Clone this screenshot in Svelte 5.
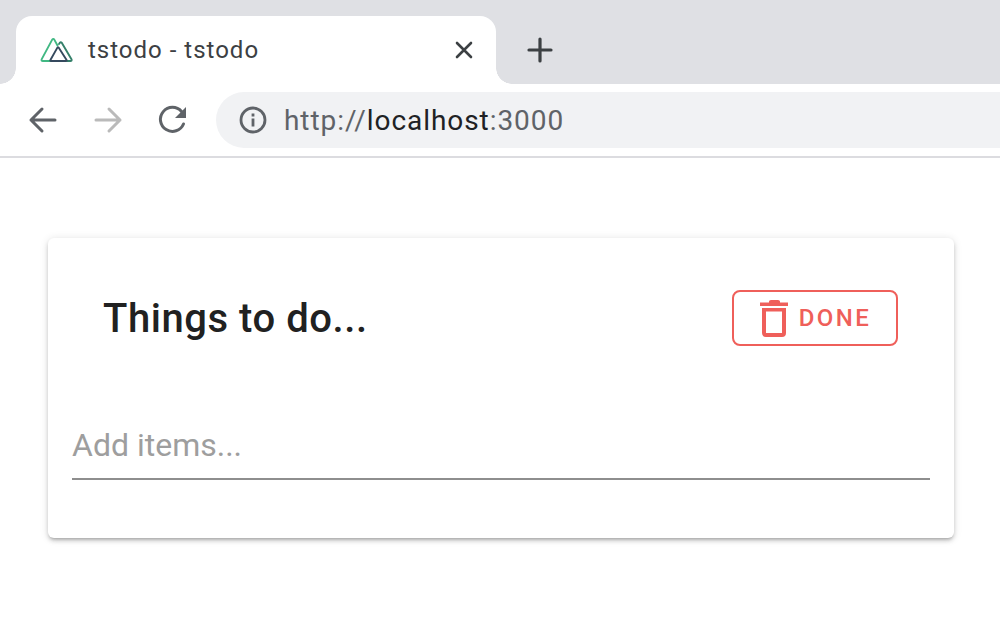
<script>
  let item = $state("");
</script>

<div class="browser">
  <div class="tabstrip">
    <div class="tab">
      <svg class="favicon" width="33" height="26" viewBox="0 0 33 26" fill="none" stroke-width="1.9" stroke-linejoin="round" stroke-linecap="round">
        <path d="M17.5 8.5 L14.3 2.6 Q13.3 1.2 12.2 2.6 L1.6 22.4 Q1.2 24 2.8 24 H10.5" stroke="#41b883" />
        <path d="M19 7 L20 5.6 Q20.8 4.6 21.6 5.6 L31.6 22.4 Q32 24 30.4 24 H27" stroke="#35806a" />
        <path d="M18.6 10.6 Q18 10 17.4 10.6 L10.4 23 Q10 24 11 24 H26 Q27 24 26.6 23 Z" stroke="#35495e" />
      </svg>
      <span class="tab-title">tstodo - tstodo</span>
      <svg class="close" width="18" height="18" viewBox="0 0 18 18">
        <path d="M2 2 L16 16 M16 2 L2 16" stroke="#3c4043" stroke-width="2.6" stroke-linecap="round" />
      </svg>
    </div>
    <svg class="newtab" width="26" height="26" viewBox="0 0 26 26">
      <path d="M13 2 V24 M2 13 H24" stroke="#3c4043" stroke-width="3.2" stroke-linecap="round" />
    </svg>
  </div>

  <div class="toolbar">
    <svg class="nav" width="32" height="32" viewBox="0 0 32 32" fill="none" stroke="#5f6368" stroke-width="3" stroke-linecap="round" stroke-linejoin="round">
      <path d="M28 16 H4 M15 5 L4 16 L15 27" />
    </svg>
    <svg class="nav" width="32" height="32" viewBox="0 0 32 32" fill="none" stroke="#bababa" stroke-width="3" stroke-linecap="round" stroke-linejoin="round">
      <path d="M4 16 H28 M17 5 L28 16 L17 27" />
    </svg>
    <svg class="nav" width="32" height="32" viewBox="0 0 32 32" fill="none">
      <path d="M26.5 20 A12 12 0 1 1 24.5 7.5" stroke="#5f6368" stroke-width="3" stroke-linecap="round" />
      <path d="M29 3 V14 H18 Z" fill="#5f6368" />
    </svg>
    <div class="omnibox">
      <svg width="28" height="28" viewBox="0 0 28 28" fill="none">
        <circle cx="14" cy="14" r="12" stroke="#5f6368" stroke-width="2.8" />
        <rect x="12.6" y="12.5" width="2.8" height="8" fill="#5f6368" />
        <rect x="12.6" y="7.5" width="2.8" height="3" fill="#5f6368" />
      </svg>
      <span class="url">http://<b>localhost</b>:3000</span>
    </div>
  </div>

  <main class="page">
    <section class="card">
      <header class="card-head">
        <h1>Things to do...</h1>
        <button class="done">
          <svg width="30" height="38" viewBox="0 0 30 38" fill="#ef5f5a">
            <path d="M10 1.5 Q10 0 12 0 H19 Q21 0 21 1.5 V2.5 H29 V6 H1 V2.5 H10 Z" />
            <path fill-rule="evenodd" d="M3 8 H27 V33 Q27 37 23 37 H7 Q3 37 3 33 Z M7 11.5 V33 H23 V11.5 Z" />
          </svg>
          <span>DONE</span>
        </button>
      </header>
      <div class="field">
        <input bind:value={item} placeholder="Add items..." />
      </div>
    </section>
  </main>
</div>

<style>
  :global(body) {
    background: #fff;
    font-family: Roboto, "Liberation Sans", sans-serif;
  }
  .browser {
    width: 1000px;
    height: 640px;
    overflow: hidden;
    display: flex;
    flex-direction: column;
  }
  .tabstrip {
    height: 84px;
    background: #dfe0e4;
    padding: 16px 0 0 16px;
    box-sizing: border-box;
    display: flex;
    align-items: flex-start;
  }
  .tab {
    position: relative;
    width: 480px;
    height: 68px;
    background: #fff;
    border-radius: 16px 16px 0 0;
    display: flex;
    align-items: center;
    padding: 0 23px 0 24px;
    box-sizing: border-box;
  }
  .tab::before,
  .tab::after {
    content: "";
    position: absolute;
    bottom: 0;
    width: 16px;
    height: 16px;
  }
  .tab::before {
    left: -16px;
    background: radial-gradient(circle at 0 0, #dfe0e4 15.5px, #fff 16px);
  }
  .tab::after {
    right: -16px;
    background: radial-gradient(circle at 100% 0, #dfe0e4 15.5px, #fff 16px);
  }
  .favicon {
    flex: none;
  }
  .tab-title {
    margin-left: 15px;
    font-size: 24px;
    letter-spacing: 1px;
    color: #3c4043;
    flex: 1;
    white-space: nowrap;
  }
  .close {
    flex: none;
  }
  .newtab {
    margin: 21px 0 0 31px;
  }
  .toolbar {
    height: 74px;
    border-bottom: 2px solid #dcdce0;
    box-sizing: border-box;
    display: flex;
    align-items: flex-start;
    padding: 8px 0 0 27px;
    gap: 33px;
    background: #fff;
  }
  .nav {
    flex: none;
    margin-top: 12px;
  }
  .omnibox {
    flex: 1;
    height: 56px;
    margin-left: -6px;
    margin-right: -40px;
    background: #f1f2f4;
    border-radius: 28px;
    display: flex;
    align-items: center;
    padding-left: 23px;
    gap: 17px;
  }
  .url {
    font-size: 28px;
    letter-spacing: 0.93px;
    color: #5f6368;
    white-space: nowrap;
  }
  .url b {
    font-weight: 400;
    color: #202124;
  }
  .page {
    padding: 80px 46px 0 48px;
  }
  .card {
    height: 300px;
    background: #fff;
    border-radius: 6px;
    box-shadow: 0 3px 3px -2px rgba(0, 0, 0, 0.2), 0 3px 4px rgba(0, 0, 0, 0.14), 0 1px 8px rgba(0, 0, 0, 0.12);
    display: flex;
    flex-direction: column;
    padding: 52px 24px 0;
    box-sizing: border-box;
  }
  .card-head {
    display: flex;
    align-items: center;
    justify-content: space-between;
    padding: 0 32px 0 31px;
  }
  h1 {
    margin: 0;
    font-size: 40px;
    font-weight: 500;
    letter-spacing: 0.55px;
    color: #212121;
  }
  .done {
    width: 166px;
    height: 56px;
    background: none;
    border: 2px solid #ef5f5a;
    border-radius: 8px;
    color: #ef5f5a;
    font-family: inherit;
    font-size: 24px;
    font-weight: 500;
    letter-spacing: 2.4px;
    display: flex;
    align-items: center;
    justify-content: center;
    gap: 10px;
    padding: 0;
  }
  .done svg {
    margin-top: 2px;
  }
  .field {
    margin-top: 68px;
    border-bottom: 2px solid #8e8e8e;
  }
  input {
    display: block;
    width: 100%;
    height: 62px;
    padding: 0 0 2px;
    border: 0;
    outline: 0;
    background: none;
    font-family: inherit;
    font-size: 32px;
    color: #212121;
  }
  input::placeholder {
    color: #9e9e9e;
    opacity: 1;
  }
</style>
